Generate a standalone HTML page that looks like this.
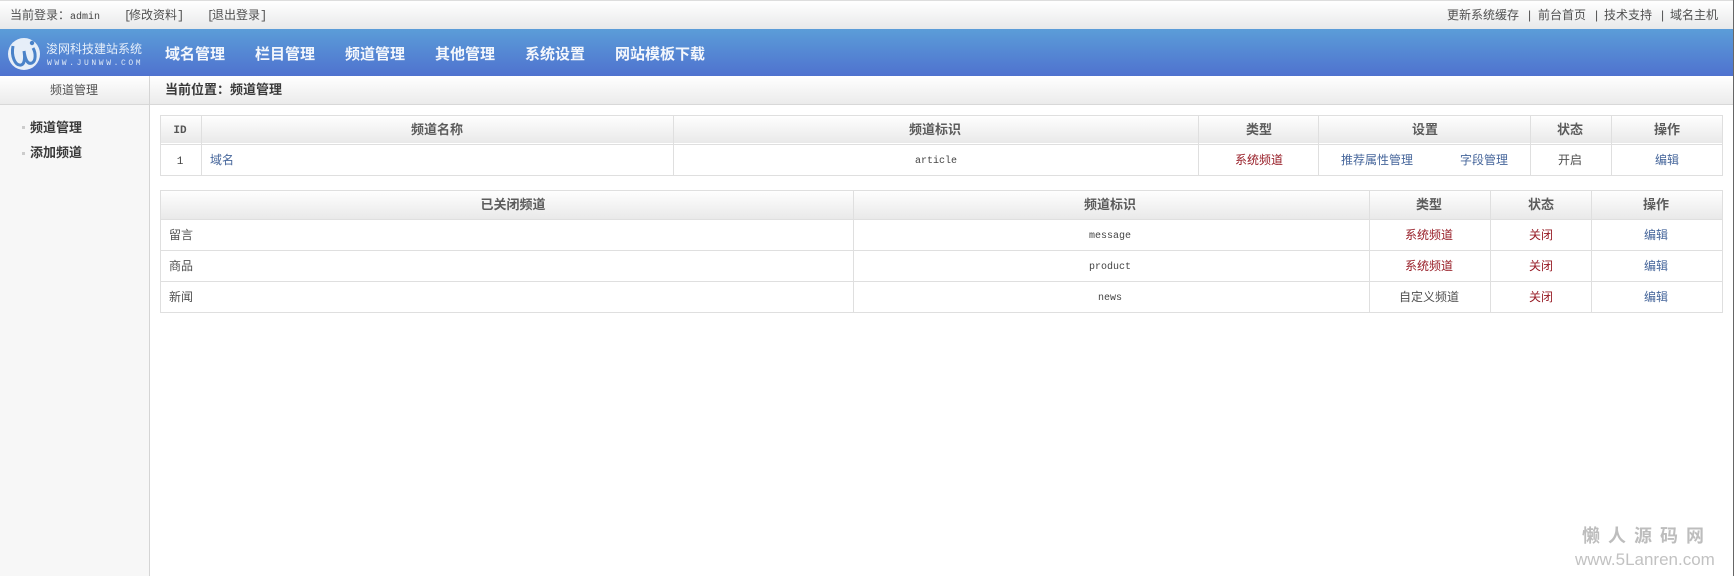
<!DOCTYPE html>
<html lang="zh-CN"><head><meta charset="utf-8"><title>频道管理</title>
<style>
html,body{margin:0;padding:0;background:#fff}
#p{position:relative;width:1734px;height:576px;overflow:hidden;background:#fff;font:12px/16px "Liberation Sans","Noto Sans CJK SC",sans-serif;color:#505050}
#p div{position:absolute}
.t{position:absolute;white-space:nowrap;line-height:16px;margin-top:-8px}
.c{transform:translateX(-50%)}
.h{font-weight:bold;color:#5c5c5c;font-size:13px}
.m{font-family:"Liberation Mono","Noto Sans CJK SC",monospace;font-size:10px;color:#444}
.b{font-family:"Liberation Mono",monospace;display:inline-block;width:5px}
.l{color:#46669b}.r{color:#971c26}
.n{color:#f4f7fc;font-size:15px;font-weight:bold;line-height:20px;margin-top:-10px}
.hb{background:linear-gradient(#fff,#e9e9e9)}
.ln{background:#dfdfdf}
</style></head><body><div id="p">
<div style="left:0;top:0;width:1734px;height:1px;background:#ddd"></div>
<div style="left:0;top:1px;width:1734px;height:28px;background:linear-gradient(#fff,#e8e9ea)"></div>
<div style="left:0;top:29px;width:1734px;height:47px;background:linear-gradient(#5b9dd8,#4f72cf)"></div>
<div style="left:0;top:76px;width:1734px;height:28px;background:linear-gradient(#fff,#ebebeb)"></div>
<div style="left:0;top:104px;width:1734px;height:1px;background:#d8d8d8"></div>
<div style="left:0;top:105px;width:149px;height:471px;background:#f7f7f7"></div>
<div style="left:149px;top:76px;width:1px;height:500px;background:#d5d5d5"></div>
<div style="left:1733px;top:0;width:1px;height:576px;background:#666"></div>

<span class="t" style="left:10px;top:15px">当前登录：<span class="m">admin</span></span>
<span class="t" style="left:124px;top:15px"><span class="b">[</span>修改资料<span class="b">]</span></span>
<span class="t" style="left:207px;top:15px"><span class="b">[</span>退出登录<span class="b">]</span></span>
<span class="t" style="left:1447px;top:15px">更新系统缓存</span>
<span class="t" style="left:1528px;top:15px">|</span>
<span class="t" style="left:1538px;top:15px">前台首页</span>
<span class="t" style="left:1595px;top:15px">|</span>
<span class="t" style="left:1604px;top:15px">技术支持</span>
<span class="t" style="left:1661px;top:15px">|</span>
<span class="t" style="left:1670px;top:15px">域名主机</span>

<svg style="position:absolute;left:7px;top:37px" width="34" height="34" viewBox="0 0 34 34">
<circle cx="17" cy="17" r="16" fill="#e6eef8"/>
<path d="M6 9C4 19 8 29 14 28C18 27 18 20 17 14C18 21 20 28 25 26C29 24 29 16 26 11" fill="none" stroke="#4a82c8" stroke-width="3"/>
<circle cx="25" cy="6" r="2.2" fill="#4a82c8"/>
</svg>
<span class="t" style="left:46px;top:49px;color:#e6effa">浚网科技建站系统</span>
<span class="t" style="left:47px;top:64px;color:#dfeaf7;font-size:8px;letter-spacing:2.6px;font-family:'Liberation Mono',monospace">WWW.JUNWW.COM</span>

<span class="t n" style="left:165px;top:55px">域名管理</span>
<span class="t n" style="left:255px;top:55px">栏目管理</span>
<span class="t n" style="left:345px;top:55px">频道管理</span>
<span class="t n" style="left:435px;top:55px">其他管理</span>
<span class="t n" style="left:525px;top:55px">系统设置</span>
<span class="t n" style="left:615px;top:55px">网站模板下载</span>

<span class="t c" style="left:74px;top:90px">频道管理</span>
<span class="t" style="left:165px;top:90px;font-size:13px;font-weight:bold;color:#3a3a3a">当前位置：频道管理</span>
<div style="left:22px;top:126px;width:3px;height:3px;background:#ccc"></div>
<div style="left:22px;top:152px;width:3px;height:3px;background:#ccc"></div>
<span class="t" style="left:30px;top:128px;font-size:13px;font-weight:bold;color:#3a3a3a">频道管理</span>
<span class="t" style="left:30px;top:153px;font-size:13px;font-weight:bold;color:#3a3a3a">添加频道</span>

<!-- table 1 -->
<div class="hb" style="left:160px;top:115px;width:1562px;height:28px"></div>
<div class="ln" style="left:160px;top:115px;width:1563px;height:1px"></div>
<div class="ln" style="left:160px;top:144px;width:1563px;height:1px"></div>
<div class="ln" style="left:160px;top:175px;width:1563px;height:1px"></div>
<div class="ln" style="left:160px;top:115px;width:1px;height:61px"></div>
<div class="ln" style="left:201px;top:115px;width:1px;height:61px"></div>
<div class="ln" style="left:673px;top:115px;width:1px;height:61px"></div>
<div class="ln" style="left:1198px;top:115px;width:1px;height:61px"></div>
<div class="ln" style="left:1318px;top:115px;width:1px;height:61px"></div>
<div class="ln" style="left:1530px;top:115px;width:1px;height:61px"></div>
<div class="ln" style="left:1611px;top:115px;width:1px;height:61px"></div>
<div class="ln" style="left:1722px;top:115px;width:1px;height:61px"></div>
<span class="t c m" style="left:180px;top:131px;font-weight:bold;font-size:11px;color:#555">ID</span>
<span class="t c h" style="left:437px;top:130px">频道名称</span>
<span class="t c h" style="left:935px;top:130px">频道标识</span>
<span class="t c h" style="left:1259px;top:130px">类型</span>
<span class="t c h" style="left:1425px;top:130px">设置</span>
<span class="t c h" style="left:1570px;top:130px">状态</span>
<span class="t c h" style="left:1667px;top:130px">操作</span>
<span class="t c m" style="left:180px;top:162px;font-size:11px">1</span>
<span class="t l" style="left:210px;top:160px">域名</span>
<span class="t c m" style="left:936px;top:162px">article</span>
<span class="t c r" style="left:1259px;top:160px">系统频道</span>
<span class="t l" style="left:1341px;top:160px">推荐属性管理</span>
<span class="t l" style="left:1460px;top:160px">字段管理</span>
<span class="t c" style="left:1570px;top:160px">开启</span>
<span class="t c l" style="left:1667px;top:160px">编辑</span>

<!-- table 2 -->
<div class="hb" style="left:160px;top:190px;width:1562px;height:29px"></div>
<div class="ln" style="left:160px;top:190px;width:1563px;height:1px"></div>
<div class="ln" style="left:160px;top:219px;width:1563px;height:1px"></div>
<div class="ln" style="left:160px;top:250px;width:1563px;height:1px"></div>
<div class="ln" style="left:160px;top:281px;width:1563px;height:1px"></div>
<div class="ln" style="left:160px;top:312px;width:1563px;height:1px"></div>
<div class="ln" style="left:160px;top:190px;width:1px;height:123px"></div>
<div class="ln" style="left:853px;top:190px;width:1px;height:123px"></div>
<div class="ln" style="left:1369px;top:190px;width:1px;height:123px"></div>
<div class="ln" style="left:1490px;top:190px;width:1px;height:123px"></div>
<div class="ln" style="left:1591px;top:190px;width:1px;height:123px"></div>
<div class="ln" style="left:1722px;top:190px;width:1px;height:123px"></div>
<span class="t c h" style="left:513px;top:205px">已关闭频道</span>
<span class="t c h" style="left:1110px;top:205px">频道标识</span>
<span class="t c h" style="left:1429px;top:205px">类型</span>
<span class="t c h" style="left:1541px;top:205px">状态</span>
<span class="t c h" style="left:1656px;top:205px">操作</span>

<span class="t" style="left:169px;top:235px">留言</span>
<span class="t c m" style="left:1110px;top:237px">message</span>
<span class="t c r" style="left:1429px;top:235px">系统频道</span>
<span class="t c r" style="left:1541px;top:235px">关闭</span>
<span class="t c l" style="left:1656px;top:235px">编辑</span>

<span class="t" style="left:169px;top:266px">商品</span>
<span class="t c m" style="left:1110px;top:268px">product</span>
<span class="t c r" style="left:1429px;top:266px">系统频道</span>
<span class="t c r" style="left:1541px;top:266px">关闭</span>
<span class="t c l" style="left:1656px;top:266px">编辑</span>

<span class="t" style="left:169px;top:297px">新闻</span>
<span class="t c m" style="left:1110px;top:299px">news</span>
<span class="t c" style="left:1429px;top:297px">自定义频道</span>
<span class="t c r" style="left:1541px;top:297px">关闭</span>
<span class="t c l" style="left:1656px;top:297px">编辑</span>

<span class="t" style="left:1582px;top:536px;font-size:18px;font-weight:bold;line-height:20px;margin-top:-10px;letter-spacing:8px;color:#bdbdbd">懒人源码网</span>
<span class="t" style="left:1575px;top:560px;font-size:17px;line-height:18px;margin-top:-9px;color:#c2c2c2">www.5Lanren.com</span>
</div></body></html>
